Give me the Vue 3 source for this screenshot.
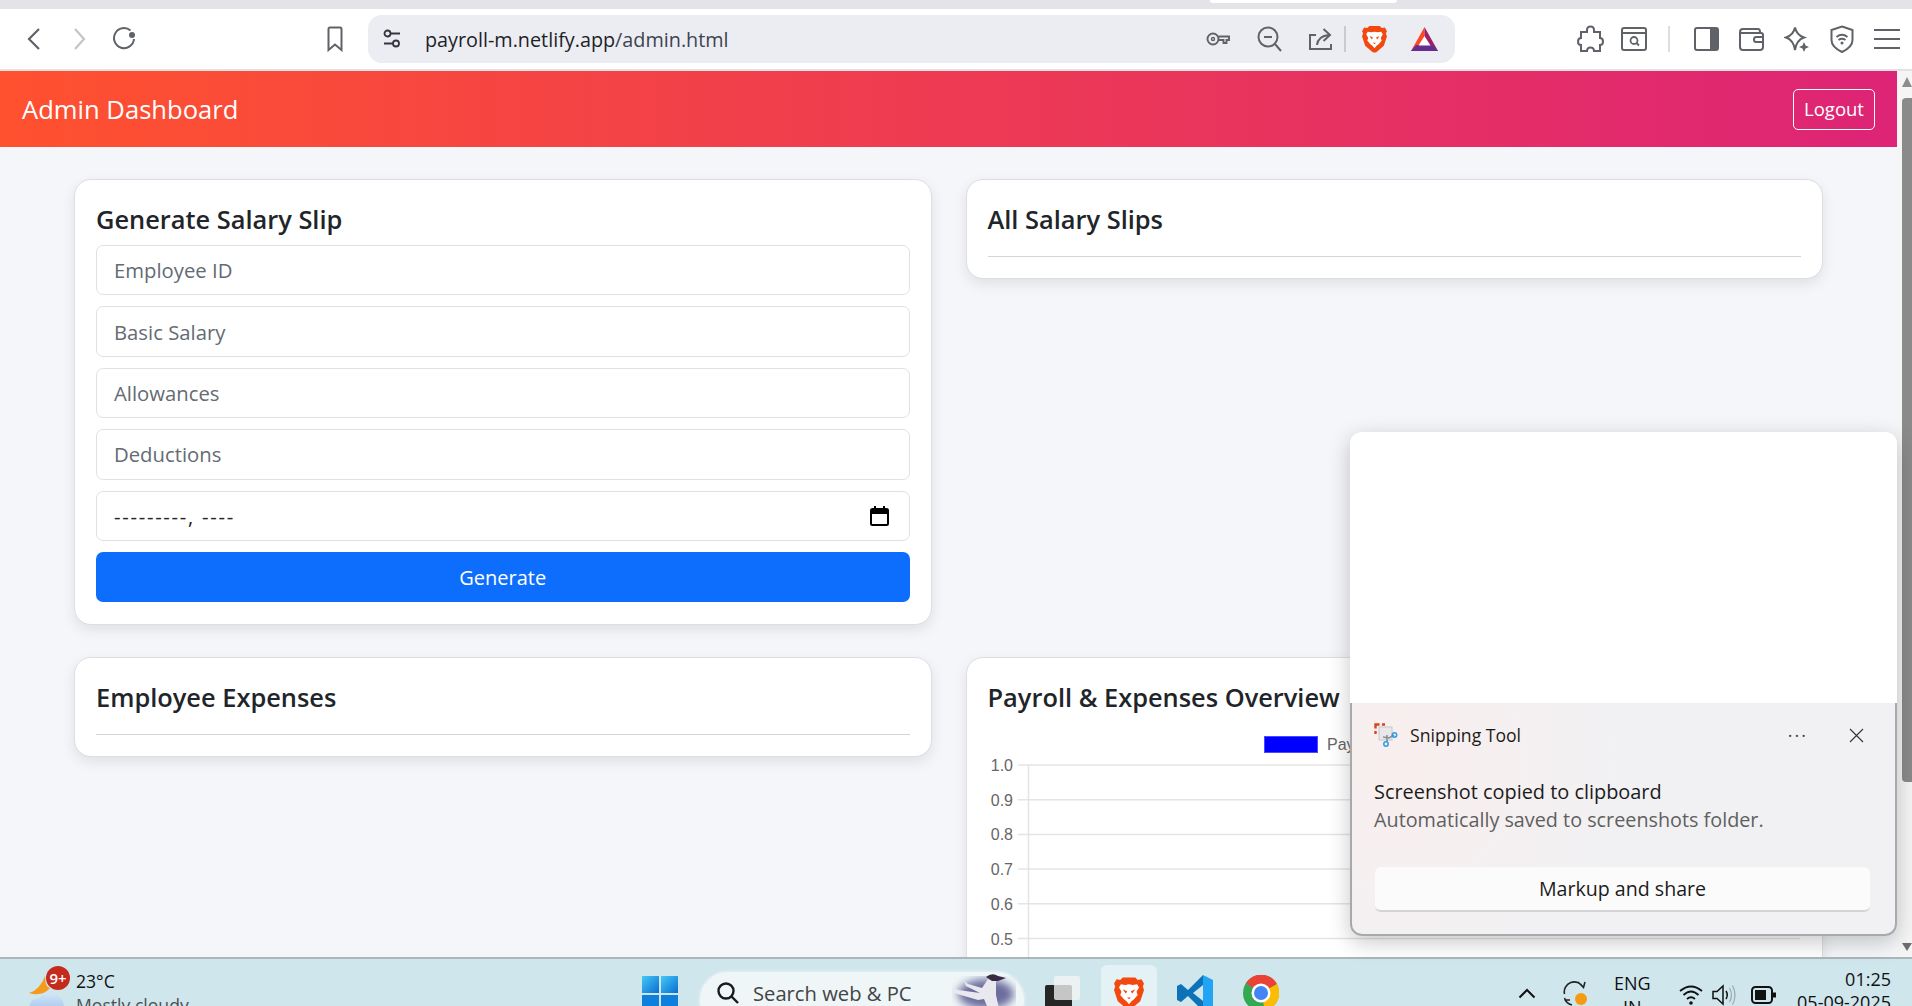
<template>
  <div class="screen">
    <div class="tabstrip"><div class="tab-edge"></div></div>

    <div class="toolbar">
      <svg class="ic" style="margin-left:27px" width="14" height="24" viewBox="0 0 14 24"><path d="M12 2 L2 12 L12 22" class="ln" stroke-width="2.2"/></svg>
      <svg class="ic" style="margin-left:32px" width="13" height="24" viewBox="0 0 13 24"><path d="M2 2 L11 12 L2 22" class="ln faded" stroke-width="2.2"/></svg>
      <svg class="ic" style="margin-left:27px" width="24" height="26" viewBox="0 0 24 26"><path d="M17.5 4.500 A10 10 0 1 0 21 13" class="ln" stroke-width="2"/><circle cx="19" cy="9" r="3" fill="#5f6368"/></svg>
      <svg class="ic" style="margin-left:189px" width="18" height="26" viewBox="0 0 18 26"><path d="M2.500 3 Q2.500 1.500 4 1.500 H14 Q15.500 1.500 15.500 3 V24 L9 18.500 L2.500 24 Z" class="ln" stroke-width="2"/></svg>

      <div class="omnibox">
        <svg class="ic" style="margin-left:15px" width="18" height="20" viewBox="0 0 18 20"><circle cx="4.500" cy="4.500" r="3" class="ln dark" stroke-width="1.800"/><path d="M8 4.500 H17 M1 14.500 H10" class="ln dark" stroke-width="1.800"/><circle cx="13" cy="14.500" r="3" class="ln dark" stroke-width="1.800"/></svg>
        <span class="url">payroll-m.netlify.app<span class="url-path">/admin.html</span></span>
        <div class="omni-icons">
          <svg class="ic" width="24" height="16" viewBox="0 0 24 16"><circle cx="7" cy="8" r="5.500" class="ln" stroke-width="1.900"/><circle cx="7" cy="8" r="1.500" class="ln" stroke-width="1.400"/><path d="M12.500 5.500 H23 V9 H20.500 V12 H17.500 V9 H12.500" class="ln" stroke-width="1.900"/></svg>
          <svg class="ic" style="margin-left:27px" width="25" height="26" viewBox="0 0 25 26"><circle cx="11" cy="11" r="9.500" class="ln" stroke-width="2"/><path d="M7 11 H15 M18 18 L24 25" class="ln" stroke-width="2"/></svg>
          <svg class="ic" style="margin-left:26px" width="24" height="24" viewBox="0 0 24 24"><path d="M8 8 H2 V22 H23 V17" class="ln" stroke-width="2"/><path d="M9 18 Q10 9 21 8 M15.500 2 L22 8 L15.500 14" class="ln" stroke-width="2"/></svg>
          <div class="omni-sep"></div>
          <svg class="ic" style="margin-left:16px" width="25" height="28" viewBox="0 0 24 27"><path d="M7 1 H17 L19 3 L22 2.500 L24 6 L23 8 L24 11 L21 20 L14 26 Q12 27 10 26 L3 20 L0 11 L1 8 L0 6 L2 2.500 L5 3 Z" fill="#f1490f"/><path d="M12 6.500 L9 7 L5.500 6.500 L4 9 L6 12.500 L5 15 L8 18.500 L10 20 L12 22.500 L14 20 L16 18.500 L19 15 L18 12.500 L20 9 L18.500 6.500 L15 7 Z" fill="#fff"/><path d="M7 10.500 L10.500 12 L9.500 14 Z M17 10.500 L13.500 12 L14.500 14 Z M10.500 17 H13.500 L12 18.500 Z" fill="#f1490f"/></svg>
          <svg class="ic" style="margin-left:24px" width="27" height="24" viewBox="0 0 27 24"><path d="M13.500 0 L0 24 H6 L13.500 10 Z" fill="#ff4724"/><path d="M13.500 0 L27 24 H21 L13.500 10 Z" fill="#9e1f63"/><path d="M0 24 L5 18 H22 L27 24 Z" fill="#662d91"/><path d="M13.500 9 L19.500 18.500 H7.500 Z" fill="#fff"/></svg>
        </div>
      </div>

      <svg class="ic" style="margin-left:122px" width="27" height="28" viewBox="0 0 27 28"><path d="M10 5 Q10 1.500 13.500 1.500 Q17 1.500 17 5 V7 H23 V13 Q26 13 26 16.500 Q26 20 23 20 V26 H17 Q17 22.500 13.500 22.500 Q10 22.500 10 26 H4 V20 Q1 20 1 16.500 Q1 13 4 13 V7 H10 Z" class="ln" stroke-width="2"/></svg>
      <svg class="ic" style="margin-left:17px" width="26" height="24" viewBox="0 0 26 24"><rect x="1" y="1" width="24" height="22" rx="2" class="ln" stroke-width="2"/><path d="M1 6 H25" class="ln" stroke-width="2"/><circle cx="13" cy="13.500" r="3.500" class="ln" stroke-width="1.800"/><path d="M15.500 16 L18 18.500" class="ln" stroke-width="1.800"/></svg>
      <div class="bar-sep"></div>
      <svg class="ic" style="margin-left:24px" width="25" height="24" viewBox="0 0 25 24"><rect x="1" y="1" width="23" height="22" rx="2" class="ln" stroke-width="2"/><rect x="16" y="1" width="8" height="22" fill="#5f6368"/></svg>
      <svg class="ic" style="margin-left:20px" width="25" height="24" viewBox="0 0 25 24"><path d="M1 5 Q1 2 4 2 H19 Q21 2 21 5 M1 5 V20 Q1 23 4 23 H21 Q24 23 24 20 V8 Q24 6 22 6 H4 Q1 6 1 5" class="ln" stroke-width="2"/><path d="M24 10 H17 Q15 10 15 12.500 Q15 15 17 15 H24" class="ln" stroke-width="2"/></svg>
      <svg class="ic" style="margin-left:20px" width="26" height="27" viewBox="0 0 26 27"><path d="M11 1.500 Q12.500 9 20 11.500 Q12.500 14 11 24 Q9.500 14 2 11.500 Q9.500 9 11 1.500 Z" class="ln" stroke-width="2"/><path d="M20 16 L21.500 19.500 L25 21 L21.500 22.500 L20 26 L18.500 22.500 L15 21 L18.500 19.500 Z" fill="#5f6368"/></svg>
      <svg class="ic" style="margin-left:20px" width="24" height="28" viewBox="0 0 24 28"><path d="M12 1.500 L22.500 5 V15 Q22.500 22 12 27 Q1.500 22 1.500 15 V5 Z" class="ln" stroke-width="2"/><path d="M6.500 12 Q12 7.500 17.500 12 M8.500 15 Q12 12.500 15.500 15" class="ln" stroke-width="1.800"/><circle cx="12" cy="18" r="1.500" fill="#5f6368"/></svg>
      <svg class="ic" style="margin-left:20px" width="26" height="20" viewBox="0 0 26 20"><path d="M0 1 H26 M0 10 H26 M0 19 H26" class="ln" stroke-width="2.200"/></svg>
    </div>

    <div class="viewport">
      <div class="page">
        <header class="navbar">
          <span class="brand">Admin Dashboard</span>
          <button class="logout">Logout</button>
        </header>

        <div class="grid">
          <section class="card slip-card">
            <h4>Generate Salary Slip</h4>
            <form class="slip-form" @submit.prevent>
              <input v-for="p in fields" :key="p" class="field" type="text" :placeholder="p" />
              <div class="field month">
                <span class="month-mask">---------, ----</span>
                <svg width="19" height="20" viewBox="0 0 19 20"><rect x="1" y="3" width="17" height="16" rx="1.500" fill="none" stroke="#000" stroke-width="2"/><rect x="1" y="3" width="17" height="5" fill="#000"/><path d="M5 0 V3 M14 0 V3" stroke="#000" stroke-width="2"/></svg>
              </div>
              <button class="generate">Generate</button>
            </form>
          </section>

          <section class="card">
            <h4>All Salary Slips</h4>
            <hr />
          </section>

          <section class="card">
            <h4>Employee Expenses</h4>
            <hr />
          </section>

          <section class="card">
            <h4>Payroll &amp; Expenses Overview</h4>
            <svg class="chart" width="813" height="400" viewBox="0 0 813 400">
              <rect x="276.500" y="12.500" width="53" height="16" fill="#0000ff" stroke="#4a4aff" />
              <text x="339" y="26" class="tick">Payroll</text>
              <line x1="40.500" y1="41" x2="40.500" y2="400" stroke="#e4e4e4" stroke-width="1.500" />
              <g v-for="(t, i) in ticks" :key="t">
                <line x1="30" :y1="41 + i * 34.7" x2="812" :y2="41 + i * 34.7" stroke="#e4e4e4" stroke-width="1.500" />
                <text x="25" :y="47 + i * 34.7" class="tick" text-anchor="end">{{ t }}</text>
              </g>
            </svg>
          </section>
        </div>
      </div>

      <div class="scrollbar">
        <div class="arrow-up"></div>
        <div class="thumb"></div>
        <div class="arrow-down"></div>
      </div>
    </div>

    <div class="taskbar">
      <div class="weather">
        <svg class="weather-ic" width="38" height="46" viewBox="0 0 38 46">
          <defs><linearGradient id="cloud" x1="0" y1="0" x2="0" y2="1"><stop offset="0" stop-color="#d4e6f8"/><stop offset="1" stop-color="#8fb8e6"/></linearGradient></defs>
          <path d="M17 3 Q17 14 22 15 Q14 24 1 20 Q12 17 17 3 Z" fill="#f59b1c"/>
          <path d="M8 46 Q-1 42 2 31 Q4 25 12 25 Q16 17 26 21 Q35 24 36 33 L36 46 Z" fill="url(#cloud)"/>
        </svg>
        <span class="badge">9+</span>
        <div class="weather-text">
          <div>23°C</div>
          <div class="muted">Mostly cloudy</div>
        </div>
      </div>

      <svg class="ic win" width="36" height="36" viewBox="0 0 36 36">
        <defs><linearGradient id="wg" x1="0" y1="0" x2="1" y2="1"><stop offset="0" stop-color="#45c8f7"/><stop offset="1" stop-color="#0a6fd0"/></linearGradient></defs>
        <rect width="17" height="17" fill="url(#wg)"/><rect x="19" width="17" height="17" fill="url(#wg)"/><rect y="19" width="17" height="17" fill="#0d7fdc"/><rect x="19" y="19" width="17" height="17" fill="#0d7fdc"/>
      </svg>

      <div class="search">
        <svg class="ic" style="margin-left:16px;margin-top:9px" width="24" height="24" viewBox="0 0 24 24"><circle cx="10" cy="10" r="7.500" fill="none" stroke="#1a1a1a" stroke-width="2.400"/><path d="M15.500 15.500 L22 22" stroke="#1a1a1a" stroke-width="2.400"/></svg>
        <span class="search-text">Search web &amp; PC</span>
        <svg class="ic dancer" width="70" height="40" viewBox="0 0 70 40">
          <defs><filter id="soft"><feGaussianBlur stdDeviation="4"/></filter></defs>
          <ellipse cx="40" cy="21" rx="28" ry="15" fill="#4c4a86" opacity=".8" filter="url(#soft)"/>
          <path d="M42 6 L36 15 L22 11 L18 8 L20 13 L34 20 L12 17 L6 15 L8 20 L32 27 L38 26 L44 40 L54 40 L50 22 L50 8 Z" fill="#e9e8ee"/>
          <path d="M40 4 Q46 -1 52 3 L60 5 L52 8 L46 8 Z" fill="#3a2b45"/>
        </svg>
      </div>

      <svg class="ic" style="margin-left:19px;margin-top:17px" width="36" height="32" viewBox="0 0 36 32"><rect x="0" y="9" width="27" height="23" rx="2" fill="#262626"/><rect x="9" y="0" width="26" height="24" rx="2" fill="#f4f4f4" opacity=".78"/></svg>

      <div class="tile">
        <svg width="30" height="34" viewBox="0 0 24 27"><path d="M7 1 H17 L19 3 L22 2.500 L24 6 L23 8 L24 11 L21 20 L14 26 Q12 27 10 26 L3 20 L0 11 L1 8 L0 6 L2 2.500 L5 3 Z" fill="#f1490f"/><path d="M12 6.500 L9 7 L5.500 6.500 L4 9 L6 12.500 L5 15 L8 18.500 L10 20 L12 22.500 L14 20 L16 18.500 L19 15 L18 12.500 L20 9 L18.500 6.500 L15 7 Z" fill="#fff"/><path d="M7 10.500 L10.500 12 L9.500 14 Z M17 10.500 L13.500 12 L14.500 14 Z M10.500 17 H13.500 L12 18.500 Z" fill="#f1490f"/></svg>
      </div>

      <svg class="ic" style="margin-left:20px;margin-top:16px" width="36" height="36" viewBox="0 0 36 36"><path d="M26 0 L11 15 L4 9 L0 11 V25 L4 27 L11 21 L26 36 V26 L16 18 L26 10 Z" fill="#0e72b8"/><path d="M26 0 L36 5 V31 L26 36 Z" fill="#20a4f3"/></svg>

      <svg class="ic" style="margin-left:30px;margin-top:16px" width="36" height="36" viewBox="0 0 36 36"><circle cx="18" cy="18" r="18" fill="#34a853"/><path d="M18 18 L3 8 A18 18 0 0 1 34 9 Z" fill="#ea4335"/><path d="M18 18 L34 9 A18 18 0 0 1 22 35.500 Z" fill="#fbbc05"/><circle cx="18" cy="18" r="9.500" fill="#fff"/><circle cx="18" cy="18" r="7" fill="#4285f4"/></svg>

      <svg class="ic" style="margin-left:239px;margin-top:29px" width="18" height="11" viewBox="0 0 18 11"><path d="M1.500 9.500 L9 2 L16.500 9.500" fill="none" stroke="#111" stroke-width="2"/></svg>

      <svg class="ic" style="margin-left:27px;margin-top:22px" width="24" height="26" viewBox="0 0 24 26"><path d="M1.500 13 A10 10 0 0 1 20 6 M15 1 L20.500 6.500 L22 1 M9 24 A10 10 0 0 1 1.500 17 M1.500 19 H7" fill="none" stroke="#222" stroke-width="1.600"/><circle cx="18" cy="18" r="6" fill="#f39c12"/></svg>

      <div class="lang"><div>ENG</div><div>IN</div></div>

      <svg class="ic" style="margin-left:28px;margin-top:25px" width="24" height="22" viewBox="0 0 24 22"><path d="M1 7 Q12 -2 23 7 M4.500 11 Q12 4 19.500 11 M8 15 Q12 11.500 16 15" fill="none" stroke="#111" stroke-width="1.800"/><circle cx="12" cy="19" r="1.800" fill="#111"/></svg>
      <svg class="ic" style="margin-left:9px;margin-top:24px" width="24" height="24" viewBox="0 0 24 24"><path d="M1 8.500 H5 L11 3 V21 L5 15.500 H1 Z" fill="none" stroke="#111" stroke-width="1.500"/><path d="M14 8 Q16.500 12 14 16" fill="none" stroke="#111" stroke-width="1.500"/><path d="M17.500 5 Q21.500 12 17.500 19 M20.500 2.500 Q25.500 12 20.500 21.500" fill="none" stroke="#9aa" stroke-width="1.200"/></svg>
      <svg class="ic" style="margin-left:15px;margin-top:27px" width="25" height="18" viewBox="0 0 25 18"><rect x="1" y="1" width="20" height="16" rx="3.500" fill="none" stroke="#111" stroke-width="2"/><rect x="4" y="4" width="11" height="10" fill="#111"/><rect x="22" y="6.500" width="3" height="5" fill="#111"/></svg>

      <div class="clock">
        <div>01:25</div>
        <div>05-09-2025</div>
      </div>
    </div>

    <div class="toast">
      <div class="toast-blank"></div>
      <div class="toast-body">
        <div class="toast-head">
          <svg width="24" height="24" viewBox="0 0 24 24"><rect x="5" y="4" width="13" height="13" fill="#e8e8ea" stroke="#c8c8cc"/><path d="M1.500 5.500 V1.500 H5.500 M8 1.500 H11 M1.500 8 V11" fill="none" stroke="#d9431e" stroke-width="2.400"/><path d="M9 14 L15 15 L20 12" fill="none" stroke="#8a8f96" stroke-width="1.600"/><path d="M13 12 V19" stroke="#8a8f96" stroke-width="1.600"/><circle cx="20.500" cy="12" r="2.200" fill="none" stroke="#2b9be8" stroke-width="1.500"/><circle cx="12" cy="21" r="2.200" fill="none" stroke="#2b9be8" stroke-width="1.500"/></svg>
          <span class="app-name">Snipping Tool</span>
          <span class="more">···</span>
          <svg class="close" width="15" height="15" viewBox="0 0 15 15"><path d="M1 1 L14 14 M14 1 L1 14" stroke="#333" stroke-width="1.100"/></svg>
        </div>
        <div class="toast-title">Screenshot copied to clipboard</div>
        <div class="toast-sub">Automatically saved to screenshots folder.</div>
        <button class="markup">Markup and share</button>
      </div>
    </div>
  </div>
</template>

<script setup>
const fields = ["Employee ID", "Basic Salary", "Allowances", "Deductions"];
const ticks = ["1.0", "0.9", "0.8", "0.7", "0.6", "0.5", "0.4", "0.3", "0.2", "0.1", "0.0"];
</script>

<style>
html,
body {
  margin: 0;
  overflow: hidden;
}
</style>

<style scoped>
* {
  box-sizing: border-box;
}
.screen {
  position: relative;
  width: 1912px;
  height: 1006px;
  display: flex;
  flex-direction: column;
  overflow: hidden;
  font-family: "Open Sans", "Noto Sans", sans-serif;
  background: #fff;
}
.ic {
  flex: none;
  display: block;
}
.ln {
  fill: none;
  stroke: #5f6368;
}
.faded {
  stroke: #c4c4c8;
}
.dark {
  stroke: #33363c;
}
.tabstrip {
  height: 9px;
  background: #e3e3e8;
  display: flex;
  padding-left: 1210px;
}
.tab-edge {
  width: 187px;
  height: 3px;
  background: #fff;
  border-radius: 0 0 6px 6px;
}
.toolbar {
  height: 62px;
  flex: none;
  display: flex;
  align-items: center;
  background: #fff;
  border-bottom: 2px solid #e2e2e5;
}
.omnibox {
  width: 1087px;
  height: 48px;
  margin-left: 24px;
  background: #ecedf2;
  border-radius: 14px;
  display: flex;
  align-items: center;
  flex: none;
}
.url {
  margin-left: 24px;
  font-size: 19.800px;
  color: #1d1f27;
  white-space: nowrap;
}
.url-path {
  color: #3e4450;
}
.omni-icons {
  margin-left: auto;
  margin-right: 17px;
  display: flex;
  align-items: center;
}
.omni-sep {
  width: 2px;
  height: 26px;
  margin-left: 12px;
  background: #c9c9ce;
}
.bar-sep {
  width: 2px;
  height: 26px;
  margin-left: 21px;
  background: #dedee2;
}
.viewport {
  flex: 1;
  min-height: 0;
  display: flex;
}
.page {
  flex: 1;
  min-width: 0;
  overflow: hidden;
  background: #f4f6f9;
}
.navbar {
  height: 76px;
  padding: 0 22px 0 22px;
  display: flex;
  align-items: center;
  justify-content: space-between;
  background: linear-gradient(to right, #ff512f, #dd2476);
}
.brand {
  color: #fff;
  font-size: 25.600px;
}
.logout {
  width: 82px;
  height: 41px;
  padding: 0 0 1px;
  color: #fff;
  font: 18.500px "Open Sans", sans-serif;
  background: transparent;
  border: 1px solid #fff;
  border-radius: 5px;
}
.grid {
  display: grid;
  grid-template-columns: minmax(0, 1fr) minmax(0, 1fr);
  align-items: start;
  column-gap: 34px;
  row-gap: 32px;
  padding: 32px 74px 0;
}
.card {
  padding: 21px;
  background: #fff;
  border: 1px solid #dcdee2;
  border-radius: 17px;
  box-shadow: 0 5px 14px rgba(0, 0, 0, 0.09);
}
.slip-card {
  padding-bottom: 22px;
}
h4 {
  margin: 0 0 8px;
  font-size: 25.400px;
  line-height: 36px;
  font-weight: 600;
  color: #212529;
}
hr {
  margin: 19px 0 0;
  border: 0;
  border-top: 1.500px solid #d3d4d6;
}
.slip-form {
  display: flex;
  flex-direction: column;
  gap: 11px;
}
.field {
  width: 100%;
  height: 50.400px;
  padding: 0 17px;
  font: 20.300px "Open Sans", sans-serif;
  color: #212529;
  background: #fff;
  border: 1px solid #dee2e6;
  border-radius: 7px;
  outline: none;
}
.field::placeholder {
  color: #646b72;
}
.month {
  display: flex;
  align-items: center;
  justify-content: space-between;
  padding-right: 20px;
}
.month-mask {
  letter-spacing: 1.700px;
}
.generate {
  height: 50.400px;
  padding: 1px 0 0;
  font: 20px "Open Sans", sans-serif;
  color: #fff;
  background: #0d6efd;
  border: 0;
  border-radius: 7px;
}
.chart {
  display: block;
  margin-top: 9px;
}
.tick {
  font: 16px "Liberation Sans", Arial, sans-serif;
  fill: #666;
}
.scrollbar {
  width: 15px;
  flex: none;
  display: flex;
  flex-direction: column;
  align-items: flex-end;
  background: #f5f5f5;
}
.arrow-up {
  margin: 6px 0 0;
  border-left: 5px solid transparent;
  border-right: 5px solid transparent;
  border-bottom: 10px solid #8d8d8d;
}
.thumb {
  width: 10px;
  height: 684px;
  margin-top: 11px;
  background: #8a8a8a;
  border-radius: 4px 0 0 4px;
}
.arrow-down {
  margin-top: 161px;
  border-left: 5px solid transparent;
  border-right: 5px solid transparent;
  border-top: 8px solid #6e6e6e;
}
.taskbar {
  height: 49px;
  flex: none;
  display: flex;
  align-items: flex-start;
  overflow: hidden;
  background: #cfe6ec;
  border-top: 2px solid #a9b6ba;
  font-size: 17px;
  color: #111;
}
.weather {
  position: relative;
  display: flex;
  width: 642px;
  padding-left: 28px;
  height: 47px;
  flex: none;
}
.weather-ic {
  margin-top: 14px;
  flex: none;
}
.badge {
  position: absolute;
  left: 46px;
  top: 7px;
  width: 24px;
  height: 24px;
  border-radius: 50%;
  background: #c42b1c;
  color: #fff;
  font-size: 15px;
  font-weight: 600;
  line-height: 24px;
  text-align: center;
}
.weather-text {
  margin: 10px 0 0 10px;
  line-height: 24px;
  white-space: nowrap;
  font-size: 17.600px;
}
.muted {
  color: #4c5054;
}
.win {
  margin-top: 17px;
}
.search {
  width: 328px;
  height: 60px;
  flex: none;
  margin: 11px 0 0 20px;
  display: flex;
  background: #eef6f8;
  border: 2px solid #dcebef;
  border-radius: 30px;
}
.search-text {
  margin: 7px 0 0 13px;
  font-size: 20.200px;
  color: #444;
  white-space: nowrap;
}
.dancer {
  margin: 1px 8px 0 auto;
}
.tile {
  width: 56px;
  height: 50px;
  flex: none;
  margin: 6px 0 0 20px;
  padding-top: 11px;
  display: flex;
  justify-content: center;
  background: #e4f1f5;
  border-radius: 6px 6px 0 0;
}
.lang {
  margin: 12px 0 0 27px;
  font-size: 18px;
  line-height: 24px;
  text-align: center;
}
.clock {
  margin: 9px 0 0 auto;
  padding-right: 21px;
  font-size: 18px;
  line-height: 23px;
  text-align: right;
  white-space: nowrap;
}
.toast {
  position: absolute;
  left: 1350px;
  top: 432px;
  width: 547px;
  height: 504px;
  display: flex;
  flex-direction: column;
  border-radius: 12px;
  box-shadow: 0 6px 22px rgba(0, 0, 0, 0.22);
}
.toast-blank {
  height: 271px;
  background: #fff;
  border-radius: 12px 12px 0 0;
}
.toast-body {
  flex: 1;
  padding: 19px 25px 0 22px;
  background: radial-gradient(circle at 8% 25%, #f9eeee 0, #f1f1f3 45%), #f1f1f3;
  border: 2px solid #a9a9ab;
  border-top: 0;
  border-radius: 0 0 12px 12px;
}
.toast-head {
  display: flex;
  align-items: center;
  height: 26px;
  color: #1b1b1b;
}
.app-name {
  margin-left: 12px;
  font-size: 17.600px;
}
.more {
  margin-left: auto;
  margin-right: 41px;
  font-size: 18px;
  letter-spacing: 2px;
  color: #444;
}
.close {
  margin-right: 6px;
}
.toast-title {
  margin-top: 30px;
  font-size: 19.900px;
  line-height: 28px;
  color: #1b1b1b;
}
.toast-sub {
  font-size: 19.800px;
  line-height: 28px;
  color: #5f5f5f;
}
.markup {
  display: block;
  width: 495px;
  height: 45px;
  margin: 33px 0 0 1px;
  padding: 0;
  font: 19.600px "Open Sans", sans-serif;
  color: #1b1b1b;
  background: #fbfbfb;
  border: 0;
  border-bottom: 2px solid #d4d4d6;
  border-radius: 6px;
}
</style>
